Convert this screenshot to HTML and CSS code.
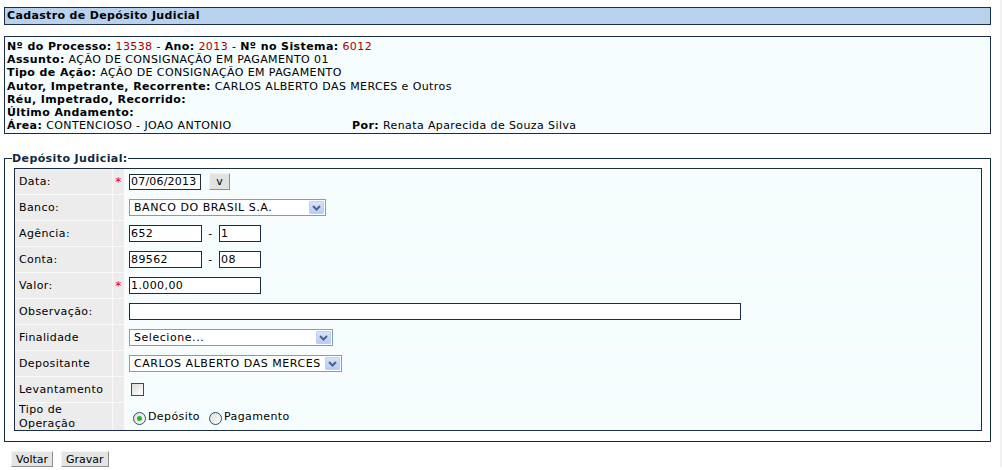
FILE: index.html
```html
<!DOCTYPE html>
<html lang="pt-BR">
  <head>
    <meta charset="UTF-8" />
    <title>Cadastro de Depósito Judicial</title>
    <link rel="stylesheet" href="styles.css">
  </head>
  <body>
    <div class="titulo">Cadastro de Depósito Judicial</div>

    <div class="info">
      <div><b>Nº do Processo:</b> <span class="red">13538</span> - <b>Ano:</b> <span class="red">2013</span> - <b>Nº no Sistema:</b> <span class="red">6012</span></div>
      <div><b>Assunto:</b> AÇÃO DE CONSIGNAÇÃO EM PAGAMENTO 01</div>
      <div><b>Tipo de Ação:</b> AÇÃO DE CONSIGNAÇÃO EM PAGAMENTO</div>
      <div><b>Autor, Impetrante, Recorrente:</b> CARLOS ALBERTO DAS MERCES e Outros</div>
      <div><b>Réu, Impetrado, Recorrido:</b></div>
      <div><b>Último Andamento:</b></div>
      <div class="linha-area">
        <span class="area"><b>Área:</b> CONTENCIOSO - JOAO ANTONIO</span>
        <span><b>Por:</b> Renata Aparecida de Souza Silva</span>
      </div>
    </div>

    <fieldset class="deposito">
      <legend>Depósito Judicial:</legend>
      <table class="form">
        <tr>
          <td class="label">Data:</td>
          <td class="req">*</td>
          <td class="campo">
            <div class="linha">
              <input type="text" class="txt data" value="07/06/2013" />
              <button type="button" class="btn-cal">v</button>
            </div>
          </td>
        </tr>
        <tr>
          <td class="label">Banco:</td>
          <td class="req"></td>
          <td class="campo">
            <div class="linha">
              <span class="sel w-banco">
                <select><option>BANCO DO BRASIL S.A.</option></select>
                <span class="seta"><svg width="9" height="6" viewBox="0 0 9 6"><path d="M1 1 L4.5 4.5 L8 1" fill="none" stroke="#4d6185" stroke-width="2" /></svg></span>
              </span>
            </div>
          </td>
        </tr>
        <tr>
          <td class="label">Agência:</td>
          <td class="req"></td>
          <td class="campo">
            <div class="linha">
              <input type="text" class="txt num" value="652" />
              <span class="traco">-</span>
              <input type="text" class="txt dv" value="1" />
            </div>
          </td>
        </tr>
        <tr>
          <td class="label">Conta:</td>
          <td class="req"></td>
          <td class="campo">
            <div class="linha">
              <input type="text" class="txt num" value="89562" />
              <span class="traco">-</span>
              <input type="text" class="txt dv" value="08" />
            </div>
          </td>
        </tr>
        <tr>
          <td class="label">Valor:</td>
          <td class="req">*</td>
          <td class="campo"><div class="linha"><input type="text" class="txt valor" value="1.000,00" /></div></td>
        </tr>
        <tr>
          <td class="label">Observação:</td>
          <td class="req"></td>
          <td class="campo"><div class="linha"><input type="text" class="txt obs" value="" /></div></td>
        </tr>
        <tr>
          <td class="label">Finalidade</td>
          <td class="req"></td>
          <td class="campo">
            <div class="linha">
              <span class="sel w-final">
                <select><option>Selecione...</option></select>
                <span class="seta"><svg width="9" height="6" viewBox="0 0 9 6"><path d="M1 1 L4.5 4.5 L8 1" fill="none" stroke="#4d6185" stroke-width="2" /></svg></span>
              </span>
            </div>
          </td>
        </tr>
        <tr>
          <td class="label">Depositante</td>
          <td class="req"></td>
          <td class="campo">
            <div class="linha">
              <span class="sel w-depo">
                <select><option>CARLOS ALBERTO DAS MERCES</option></select>
                <span class="seta"><svg width="9" height="6" viewBox="0 0 9 6"><path d="M1 1 L4.5 4.5 L8 1" fill="none" stroke="#4d6185" stroke-width="2" /></svg></span>
              </span>
            </div>
          </td>
        </tr>
        <tr class="row-lev">
          <td class="label">Levantamento</td>
          <td class="req"></td>
          <td class="campo"><div class="linha"><input type="checkbox" class="chk" /></div></td>
        </tr>
        <tr class="row-tipo">
          <td class="label">Tipo de<br>Operação</td>
          <td class="req"></td>
          <td class="campo">
            <div class="linha">
              <label class="opt"><input type="radio" name="tipo" class="rad" checked />Depósito</label>
              <label class="opt"><input type="radio" name="tipo" class="rad" />Pagamento</label>
            </div>
          </td>
        </tr>
      </table>
    </fieldset>

    <div class="acoes">
      <button type="button" class="btn">Voltar</button>
      <button type="button" class="btn">Gravar</button>
    </div>
  </body>
</html>
```

FILE: styles.css
```css
html {
  background: #fff;
  border-right: 2px solid #f0f0f0;
}

body {
  margin: 0;
  padding: 7px 9px 0 4px;
  font-family: 'DejaVu Sans', Verdana, sans-serif;
  font-size: 11px;
  letter-spacing: 0.4px;
  color: #000;
}

.titulo {
  background: #b8d1ed;
  border: 1px solid #1b2d45;
  height: 16px;
  line-height: 16px;
  padding-left: 2px;
  font-weight: bold;
  letter-spacing: 0.35px;
}

.info {
  margin-top: 11px;
  background: #f5fdfe;
  border: 1px solid #1b2d45;
  padding: 3px 2px 1px;
  line-height: 13.2px;
}

.red {
  color: #a80000;
}

.linha-area {
  display: flex;
}

.area {
  width: 345px;
}

/* bloco do formulário */
fieldset.deposito {
  margin: 18px 0 0 0;
  padding: 3px 8px 10px 9px;
  border: 1px solid #0f2f33;
  min-width: 0;
}

fieldset.deposito legend {
  padding: 0;
  margin-left: -2px;
  font-weight: bold;
  color: #102a40;
  line-height: 13px;
}

table.form {
  width: 100%;
  border: 1px solid #1b2d45;
  border-collapse: separate;
  border-spacing: 0;
}

table.form td {
  height: 25px;
  padding: 0;
  border-bottom: 1px solid #fafafa;
  border-right: 1px solid #fafafa;
  vertical-align: middle;
}

table.form tr:last-child td {
  border-bottom: none;
}

td.label {
  width: 93px;
  padding-left: 4px !important;
  background: #ececec;
}

td.req {
  width: 11px;
  background: #ececec;
  color: #e00000;
  text-align: center;
  font-size: 12px;
}

td.campo {
  background: #f6fdff;
  padding-left: 4px !important;
  border-right: none !important;
}

.row-lev td {
  height: 23px;
}

.row-tipo td {
  height: 32px;
  line-height: 13.5px;
}

.linha {
  display: flex;
  align-items: center;
}

input.txt {
  font-family: inherit;
  font-size: 11px;
  letter-spacing: inherit;
  height: 17px;
  box-sizing: border-box;
  border: 1px solid #1b2d45;
  padding: 0 1px;
  margin: 0;
  background: #fff;
}

input.data {
  width: 72px;
  height: 16px;
  letter-spacing: 0.2px;
}

input.num {
  width: 73px;
}

input.dv {
  width: 42px;
}

input.valor {
  width: 132px;
}

input.obs {
  width: 612px;
}

.traco {
  width: 17px;
  text-align: center;
}

.btn-cal {
  margin-left: 8px;
  width: 21px;
  height: 17px;
  padding: 0;
  font-family: inherit;
  font-size: 11px;
  background: #e2e2e2;
  border: 1px solid;
  border-color: #f4f4f4 #8e8e8e #8e8e8e #f4f4f4;
}

/* combos estilo XP */
.sel {
  position: relative;
  display: block;
  height: 17px;
}

.sel select {
  appearance: none;
  -webkit-appearance: none;
  width: 100%;
  height: 17px;
  box-sizing: border-box;
  border: 1px solid #7f9db9;
  border-radius: 0;
  background: #fff;
  padding: 0 0 0 4px;
  margin: 0;
  font-family: inherit;
  font-size: 11px;
  letter-spacing: 0.55px;
  color: #000;
  display: block;
}

.sel .seta {
  position: absolute;
  right: 2px;
  top: 2px;
  width: 15px;
  height: 13px;
  box-sizing: border-box;
  border: 1px solid #bccff5;
  border-radius: 1px;
  background: linear-gradient(#d7e3fd, #b6cbf8);
  display: flex;
  align-items: center;
  justify-content: center;
  pointer-events: none;
}

.w-banco {
  width: 197px;
}

.w-final {
  width: 204px;
}

.w-depo {
  width: 213px;
}

input.chk {
  appearance: none;
  -webkit-appearance: none;
  width: 13px;
  height: 13px;
  margin: 0 0 0 2px;
  border: 1px solid #1c5180;
  background: linear-gradient(135deg, #dcdcd7, #fff);
}

.opt {
  display: inline-flex;
  align-items: center;
  margin-right: 5px;
}

input.rad {
  appearance: none;
  -webkit-appearance: none;
  width: 13px;
  height: 13px;
  margin: 3px 2px 0 4px;
  border: 1px solid #1c5180;
  border-radius: 50%;
  background: linear-gradient(135deg, #dcdcd7, #fff);
  position: relative;
}

input.rad:checked::after {
  content: "";
  position: absolute;
  left: 3px;
  top: 3px;
  width: 5px;
  height: 5px;
  border-radius: 50%;
  background: #2bb22b;
}

.acoes {
  margin: 9px 0 0 7px;
  display: flex;
  gap: 8px;
}

.btn {
  height: 16px;
  padding: 0 4px;
  font-family: inherit;
  font-size: 11px;
  letter-spacing: 0;
  background: #e4e4e4;
  border: 1px solid;
  border-color: #f4f4f4 #8e8e8e #8e8e8e #f4f4f4;
}
```
